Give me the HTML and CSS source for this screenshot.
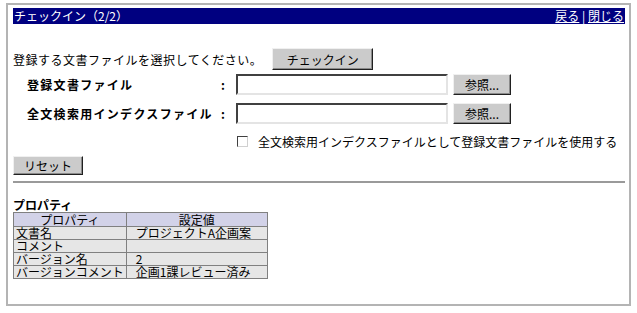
FILE: index.html
```html
<!DOCTYPE html>
<html lang="ja">
<head>
    <meta charset="UTF-8">
    <title>チェックイン</title>
    <link rel="stylesheet" href="styles.css">
</head>
<body>
    <div class="panel">
        <!-- title bar -->
        <div class="title-bar">
            <span class="title">チェックイン（2/2）</span>
            <span class="links"><a href="#">戻る</a> | <a href="#">閉じる</a></span>
        </div>

        <div class="intro">
            <span>登録する文書ファイルを選択してください。</span>
            <button class="btn checkin-btn">チェックイン</button>
        </div>

        <div class="field-row first">
            <span class="field-label">登録文書ファイル</span>
            <span class="colon">:</span>
            <input class="file-input" type="text">
            <button class="btn browse-btn">参照...</button>
        </div>
        <div class="field-row">
            <span class="field-label">全文検索用インデクスファイル</span>
            <span class="colon">:</span>
            <input class="file-input" type="text">
            <button class="btn browse-btn">参照...</button>
        </div>

        <div class="check-row">
            <input class="check" type="checkbox">
            <span>全文検索用インデクスファイルとして登録文書ファイルを使用する</span>
        </div>

        <div class="reset-row">
            <button class="btn reset-btn">リセット</button>
        </div>

        <hr class="divider">

        <!-- properties -->
        <div class="prop-heading">プロパティ</div>
        <table class="prop-table">
            <tr><th class="col-name">プロパティ</th><th class="col-value">設定値</th></tr>
            <tr><td>文書名</td><td class="value">プロジェクトA企画案</td></tr>
            <tr><td>コメント</td><td class="value"></td></tr>
            <tr><td>バージョン名</td><td class="value">2</td></tr>
            <tr><td>バージョンコメント</td><td class="value">企画1課レビュー済み</td></tr>
        </table>
    </div>
</body>
</html>
```

FILE: styles.css
```css
body {
    margin: 3px 6px;
    background: #ffffff;
    font-family: "Noto Sans CJK JP", "Liberation Sans", sans-serif;
    font-size: 12px;
    color: #000000;
}

.panel {
    border: 2px solid #b4b4b4;
    padding: 3px 4px 24px 5px;
    height: 272px;
    box-sizing: content-box;
}

/* Title bar */
.title-bar {
    display: flex;
    justify-content: space-between;
    align-items: center;
    height: 16px;
    line-height: 16px;
    background: #000080;
    color: #ffffff;
    padding: 0 1px 0 1px;
}
.links a {
    color: #ffffff;
    text-decoration: underline;
}

/* Buttons */
.btn {
    font-family: inherit;
    font-size: 12px;
    background: #cbcbcb;
    border: 1px solid;
    border-color: #f0f0f0 #202020 #202020 #f0f0f0;
    box-shadow: inset -1px -1px 0 #8a8a8a;
    padding: 0;
    color: #000000;
}
.checkin-btn { width: 101px; height: 22px; }
.browse-btn { width: 58px; height: 21px; margin-left: 5px; }
.reset-btn { width: 70px; height: 19px; }

.intro {
    display: flex;
    align-items: center;
    margin-top: 24px;
    height: 22px;
    letter-spacing: 0.5px;
}
.intro .btn { margin-left: 10px; letter-spacing: 0; }

/* Form rows */
.field-row {
    display: flex;
    align-items: center;
    height: 21px;
    margin-top: 8px;
}
.field-row.first { margin-top: 4px; }
.field-label {
    width: 194px;
    padding-left: 14px;
    font-weight: bold;
    letter-spacing: 1.3px;
}
.colon {
    width: 15px;
    font-weight: bold;
}
.file-input {
    width: 208px;
    height: 17px;
    padding: 0;
    border: 2px solid;
    border-color: #404040 #e4e4e4 #e4e4e4 #404040;
    margin: 0;
}

.check-row {
    display: flex;
    align-items: center;
    margin-top: 9px;
    padding-left: 224px;
    height: 16px;
}
.check {
    appearance: none;
    width: 11px;
    height: 11px;
    margin: 0 10px 0 0;
    border: 1px solid;
    border-color: #404040 #d0d0d0 #d0d0d0 #404040;
    background: #ffffff;
}

.reset-row {
    margin-top: 7px;
    height: 19px;
}

.divider {
    border: none;
    border-top: 2px solid #9a9a9a;
    margin: 6px 0 0 0;
}

/* Properties */
.prop-heading {
    font-weight: bold;
    margin-top: 15px;
    line-height: 14px;
}
.prop-table {
    border-collapse: collapse;
    border: 1px solid #707070;
    font-size: 12px;
    line-height: 12px;
}
.prop-table th,
.prop-table td {
    border: 1px solid #808080;
    padding: 0 2px;
    height: 12px;
    white-space: nowrap;
}
.prop-table th {
    background: #d2d2e8;
    font-weight: normal;
    text-align: center;
    height: 13px;
}
.prop-table td { background: #e6e6e6; }
.col-name { width: 107px; }
.col-value { width: 136px; }
.prop-table td.value { padding-left: 9px; }
```
